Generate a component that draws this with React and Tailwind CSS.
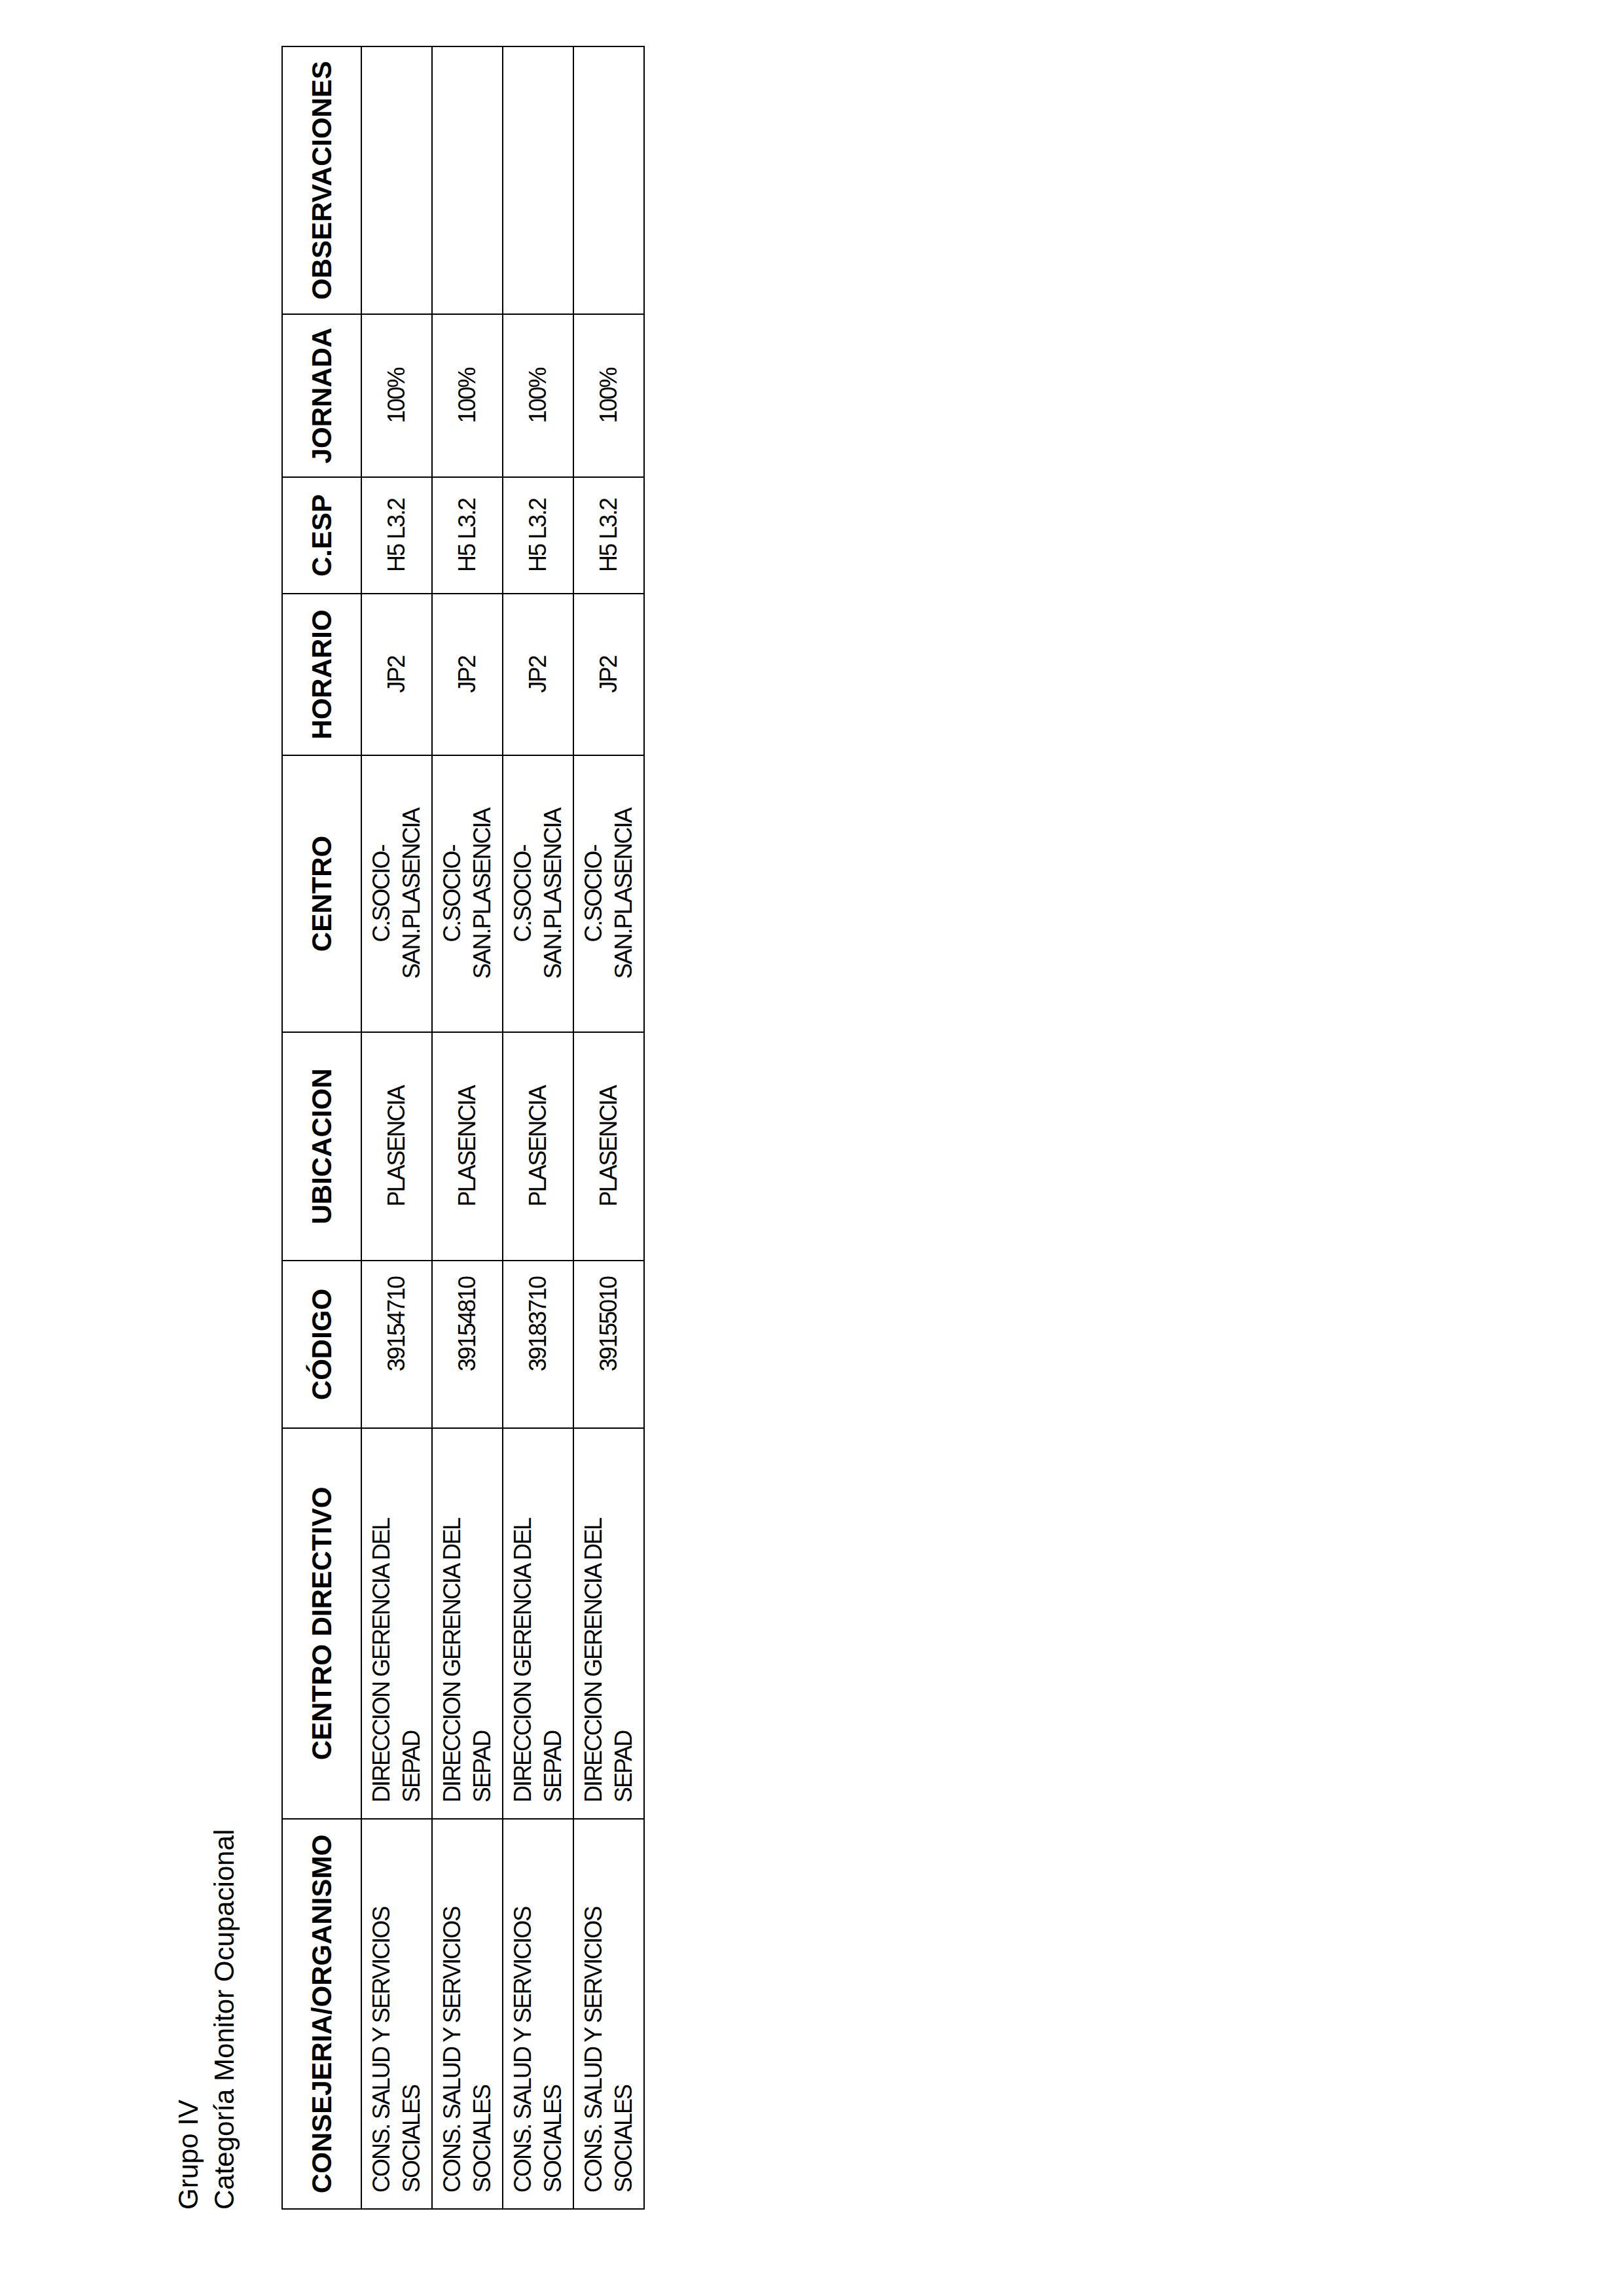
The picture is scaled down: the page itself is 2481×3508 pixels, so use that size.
import React from "react";

const cols = [
  { label: "CONSEJERIA/ORGANISMO", w: "w-[596px]", align: "text-left" },
  { label: "CENTRO DIRECTIVO", w: "w-[597px]", align: "text-left" },
  { label: "CÓDIGO", w: "w-[256px]", align: "text-right" },
  { label: "UBICACION", w: "w-[349px]", align: "text-center" },
  { label: "CENTRO", w: "w-[423px]", align: "text-center" },
  { label: "HORARIO", w: "w-[247px]", align: "text-center" },
  { label: "C.ESP", w: "w-[178px]", align: "text-center" },
  { label: "JORNADA", w: "w-[249px]", align: "text-center" },
  { label: "OBSERVACIONES", w: "w-[409px]", align: "text-center" },
];

const codes = ["39154710", "39154810", "39183710", "39155010"];

const rows = codes.map((c) => [
  "CONS. SALUD Y SERVICIOS SOCIALES",
  "DIRECCION GERENCIA DEL SEPAD",
  c,
  "PLASENCIA",
  "C.SOCIO-SAN.PLASENCIA",
  "JP2",
  "H5 L3.2",
  "100%",
  "",
]);

export default function App() {
  return (
    <div className="w-[2481px] h-[3508px] overflow-hidden bg-white text-black font-['Liberation_Sans',Arial,sans-serif]">
      <div className="w-[3508px] h-[2481px] origin-top-left [transform:translateY(3508px)_rotate(-90deg)] pl-[132px] pt-[260px]">
        <div className="text-[42px] leading-[55px]">
          <div>Grupo IV</div>
          <div>Categoría Monitor Ocupacional</div>
        </div>
        <table className="mt-[60px] border-collapse table-fixed w-[3304px]">
          <colgroup>
            {cols.map((c, i) => (
              <col key={i} className={c.w} />
            ))}
          </colgroup>
          <thead>
            <tr className="h-[121px]">
              {cols.map((c, i) => (
                <th
                  key={i}
                  className="border-2 border-black px-2 text-center align-middle text-[42px] font-bold leading-[48px] whitespace-nowrap"
                >
                  {c.label}
                </th>
              ))}
            </tr>
          </thead>
          <tbody>
            {rows.map((r, ri) => (
              <tr key={ri} className="h-[108px]">
                {r.map((v, ci) => (
                  <td
                    key={ci}
                    className={`border-2 border-black px-[24px] align-middle text-[36px] leading-[46px] tracking-[-2px] ${cols[ci].align}`}
                  >
                    {v}
                  </td>
                ))}
              </tr>
            ))}
          </tbody>
        </table>
      </div>
    </div>
  );
}
